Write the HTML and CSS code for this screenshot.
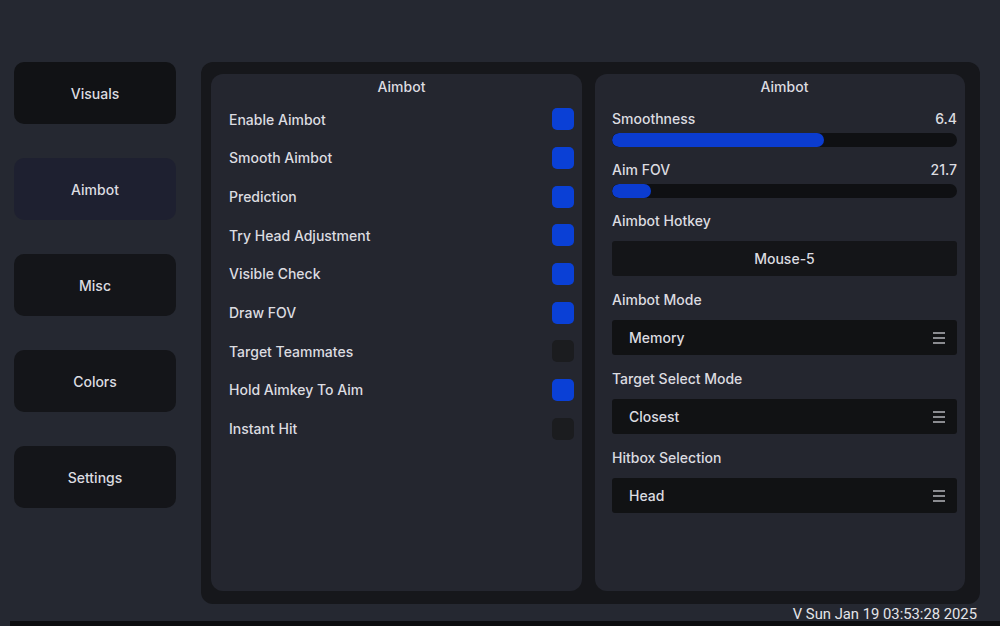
FILE: index.html
```html
<!DOCTYPE html>
<html>
<head>
<meta charset="utf-8">
<link rel="stylesheet" href="styles.css">
</head>
<body>
<div class="app">
  <nav class="sidebar">
    <div class="tab tab-dark">Visuals</div>
    <div class="tab tab-active">Aimbot</div>
    <div class="tab">Misc</div>
    <div class="tab">Colors</div>
    <div class="tab">Settings</div>
  </nav>
  <div class="right-col">
    <main class="main">
      <section class="panel">
        <div class="panel-title">Aimbot</div>
        <div class="row"><span>Enable Aimbot</span><span class="check on"></span></div>
        <div class="row"><span>Smooth Aimbot</span><span class="check on"></span></div>
        <div class="row"><span>Prediction</span><span class="check on"></span></div>
        <div class="row"><span>Try Head Adjustment</span><span class="check on"></span></div>
        <div class="row"><span>Visible Check</span><span class="check on"></span></div>
        <div class="row"><span>Draw FOV</span><span class="check on"></span></div>
        <div class="row"><span>Target Teammates</span><span class="check"></span></div>
        <div class="row"><span>Hold Aimkey To Aim</span><span class="check on"></span></div>
        <div class="row"><span>Instant Hit</span><span class="check"></span></div>
      </section>
      <section class="panel panel-right">
        <div class="panel-title">Aimbot</div>
        <div class="field">
          <div class="label-row"><span>Smoothness</span><span>6.4</span></div>
          <div class="slider"><div class="fill" style="width:61.4%"></div></div>
        </div>
        <div class="field">
          <div class="label-row"><span>Aim FOV</span><span>21.7</span></div>
          <div class="slider"><div class="fill" style="width:11.3%"></div></div>
        </div>
        <div class="field field-box">
          <div class="label-row"><span>Aimbot Hotkey</span></div>
          <div class="box box-center">Mouse-5</div>
        </div>
        <div class="field field-box">
          <div class="label-row"><span>Aimbot Mode</span></div>
          <div class="box"><span>Memory</span><span class="burger"><i></i><i></i><i></i></span></div>
        </div>
        <div class="field field-box">
          <div class="label-row"><span>Target Select Mode</span></div>
          <div class="box"><span>Closest</span><span class="burger"><i></i><i></i><i></i></span></div>
        </div>
        <div class="field field-box">
          <div class="label-row"><span>Hitbox Selection</span></div>
          <div class="box"><span>Head</span><span class="burger"><i></i><i></i><i></i></span></div>
        </div>
      </section>
    </main>
    <div class="footer">V Sun Jan 19 03:53:28 2025</div>
  </div>
</div>
<div class="bottom-strip"></div>
</body>
</html>
```

FILE: styles.css
```css
html, body {
  margin: 0;
  padding: 0;
}
body {
  width: 1000px;
  height: 626px;
  overflow: hidden;
  background: #252831;
  font-family: Inter, "Noto Sans", sans-serif;
  font-size: 14px;
  font-weight: 500;
  color: #dcdce0;
  position: relative;
}
.app {
  display: flex;
  padding: 62px 20px 0 14px;
  gap: 25px;
}
.sidebar {
  width: 162px;
  display: flex;
  flex-direction: column;
  gap: 34px;
  flex-shrink: 0;
}
.tab {
  height: 62px;
  border-radius: 10px;
  background: #141519;
  display: flex;
  align-items: center;
  justify-content: center;
  color: #dcdce0;
}
.tab-dark {
  background: #111215;
}
.tab-active {
  background: #1e2030;
}
.right-col {
  width: 779px;
  display: flex;
  flex-direction: column;
}
.main {
  height: 542px;
  box-sizing: border-box;
  background: #16171b;
  border-radius: 12px;
  padding: 12px 15px 13px 10px;
  display: flex;
  gap: 13px;
}
.panel {
  flex: 1;
  background: #24262f;
  border-radius: 12px;
  padding: 4px 8px 0 18px;
  display: flex;
  flex-direction: column;
}
.panel-right {
  padding-left: 17px;
}
.panel-title {
  line-height: 18px;
  text-align: center;
  margin-bottom: 4px;
}
.panel-right .panel-title {
  margin-bottom: 14px;
}
.row {
  height: 38.67px;
  display: flex;
  align-items: center;
  justify-content: space-between;
}
.check {
  width: 22px;
  height: 22px;
  border-radius: 5px;
  background: #1b1c1f;
}
.check.on {
  background: #0a40d6;
}
.field {
  margin-bottom: 14px;
}
.field-box {
  margin-bottom: 15px;
}
.label-row {
  display: flex;
  justify-content: space-between;
  line-height: 18px;
}
.slider {
  margin-top: 5px;
  height: 14px;
  border-radius: 7px;
  background: #0f1013;
  overflow: hidden;
}
.fill {
  height: 100%;
  border-radius: 7px;
  background: #0b3cd0;
}
.box {
  margin-top: 11px;
  height: 35px;
  border-radius: 3px;
  background: #111214;
  display: flex;
  align-items: center;
  justify-content: space-between;
  padding: 0 12px 0 17px;
}
.box-center {
  justify-content: center;
  background: #141518;
  padding: 0;
}
.burger {
  display: flex;
  flex-direction: column;
  gap: 3px;
  width: 12px;
}
.burger i {
  display: block;
  height: 2px;
  background: #8a8b90;
}
.footer {
  font-family: Roboto, "Liberation Sans", sans-serif;
  font-weight: 400;
  font-size: 14.8px;
  line-height: 18px;
  margin-top: 1px;
  text-align: right;
  padding-right: 3px;
  color: #e4e4e8;
}
.bottom-strip {
  position: absolute;
  left: 10px;
  right: 0;
  bottom: 0;
  height: 5px;
  background: #0c0d0f;
}
```
